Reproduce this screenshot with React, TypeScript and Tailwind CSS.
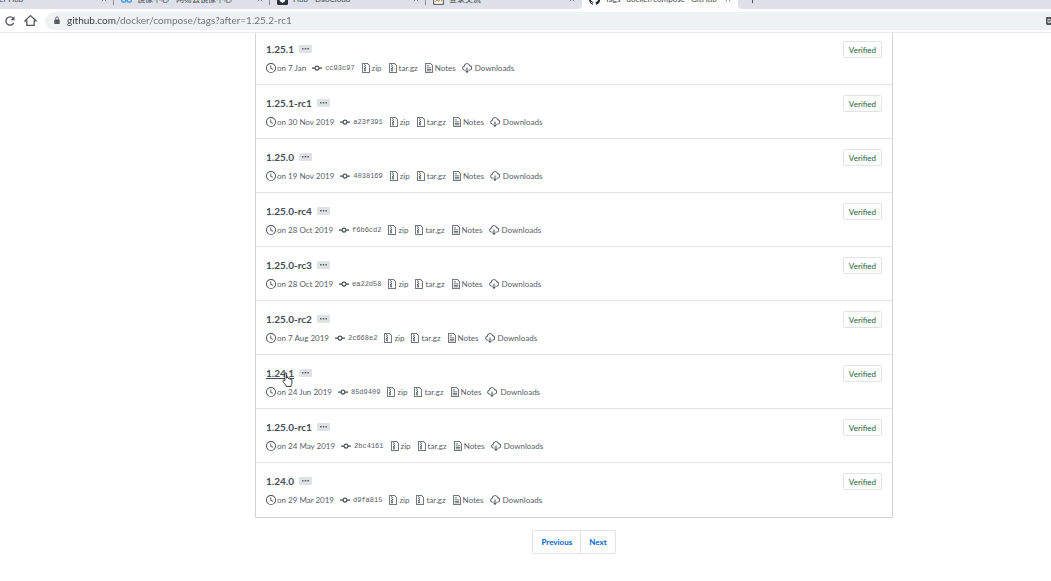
import { ReactNode } from "react";
import { Plus, X } from "lucide-react";

const tags = [
  { name: "1.25.1", date: "on 7 Jan", sha: "cc93c97" },
  { name: "1.25.1-rc1", date: "on 30 Nov 2019", sha: "a23f391" },
  { name: "1.25.0", date: "on 19 Nov 2019", sha: "4038169" },
  { name: "1.25.0-rc4", date: "on 28 Oct 2019", sha: "f6b6cd2" },
  { name: "1.25.0-rc3", date: "on 28 Oct 2019", sha: "ea22d58" },
  { name: "1.25.0-rc2", date: "on 7 Aug 2019", sha: "2c668e2" },
  { name: "1.24.1", date: "on 24 Jun 2019", sha: "85d9409", hovered: true },
  { name: "1.25.0-rc1", date: "on 24 May 2019", sha: "2bc4161" },
  { name: "1.24.0", date: "on 29 Mar 2019", sha: "d9fa815" },
];

const icons = {
  clock:
    "M8 0a8 8 0 100 16A8 8 0 008 0zm0 1.4a6.6 6.6 0 110 13.2A6.6 6.6 0 018 1.4zM7 4v4.6l3.6 2.2.8-1.2-3-1.8V4z",
  commit: "M12 7a4.1 4.1 0 00-8 0H0v2h4a4.1 4.1 0 008 0h4V7zM8 10.2a2.2 2.2 0 110-4.4 2.2 2.2 0 010 4.4z",
  zip: "M2 0h8.5L14 3.5V16H2zm1.2 1.2v13.6h9.6V4L10 1.2zM5 2h1.5v1.5H5zm1.5 1.5H8V5H6.5zM5 5h1.5v1.5H5zm1.5 1.5H8V8H6.5zM5 8h1.5L8 9.5V13H5zm.8 2v2h1.4v-2z",
  notes:
    "M2 0h8.5L14 3.5V16H2zm1.3 1.3v13.4h9.4V4L10 1.3zM4.5 4H8v1.2H4.5zm0 3h7v1.2h-7zm0 2.5h7v1.2h-7zm0 2.5h7v1.2h-7z",
  download:
    "M8.8 7v6H11l-3 3-3-3h2.2V7zM12.7 3.7A5 5 0 003 4.8 3.7 3.7 0 003.7 12H6v-1.3H3.7a2.4 2.4 0 010-4.7h.6V5a3.7 3.7 0 017.3-.6l.1.6h.8a2.9 2.9 0 010 5.7H10V12h2.5a4.2 4.2 0 00.2-8.3z",
};

const github =
  "M8 0C3.58 0 0 3.58 0 8c0 3.54 2.29 6.53 5.47 7.59.4.07.55-.17.55-.38 0-.19-.01-.82-.01-1.49-2.01.37-2.53-.49-2.69-.94-.09-.23-.48-.94-.82-1.13-.28-.15-.68-.52-.01-.53.63-.01 1.08.58 1.23.82.72 1.21 1.87.87 2.33.66.07-.52.28-.87.51-1.07-1.78-.2-3.64-.89-3.64-3.95 0-.87.31-1.59.82-2.15-.08-.2-.36-1.02.08-2.12 0 0 .67-.21 2.2.82a7.6 7.6 0 014 0c1.53-1.04 2.2-.82 2.2-.82.44 1.1.16 1.92.08 2.12.51.56.82 1.27.82 2.15 0 3.07-1.87 3.75-3.65 3.95.29.25.54.73.54 1.48 0 1.07-.01 1.93-.01 2.2 0 .21.15.46.55.38A8 8 0 008 0z";

const tabs = [
  { title: "Docker Hub", icon: <path fill="#2496ed" d="M1 8h13c0 4-3 6-7 6s-6-2-6-6zM4 4h6v3H4z" /> },
  {
    title: "镜像中心 - 网易云镜像中心",
    icon: (
      <path
        fill="none"
        stroke="#4a9de8"
        strokeWidth="2"
        d="M1 9a3 3 0 106 0 3 3 0 10-6 0zM9 9a3 3 0 106 0 3 3 0 10-6 0zM3 5c2-4 8-4 10 0"
      />
    ),
  },
  {
    title: "Hub - DaoCloud",
    icon: (
      <>
        <rect width="16" height="16" rx="2" fill="#2b3138" />
        <path fill="#fff" d="M4 6l4-2 4 2v4l-4 3-4-3z" />
      </>
    ),
  },
  {
    title: "登录交流",
    icon: (
      <>
        <rect x="1" y="1" width="14" height="14" fill="#fff" stroke="#55514c" strokeWidth="1.5" />
        <path fill="none" stroke="#c49a5a" strokeWidth="1.5" d="M3 12l3-4 2 3 3-4 2 4" />
      </>
    ),
  },
  { title: "Tags · docker/compose · GitHub", icon: <path fill="#24292e" d={github} />, active: true },
];

function TabStrip() {
  return (
    <div className="flex h-[9px] items-end overflow-hidden bg-white">
      <div className="-ml-[42px] flex grow items-end">
        {tabs.map((tab, i) => (
          <div
            key={tab.title}
            className={`flex h-5 w-39 shrink-0 items-center gap-[5px] pr-[6px] pl-[7px] text-[8px] text-[#45494d] ${
              tab.active ? "bg-white" : "bg-[#dee1e9]"
            } ${i === tabs.length - 2 ? "rounded-br-[4px]" : ""}`}
          >
            <svg viewBox="0 0 16 16" className="size-[11px] shrink-0" aria-hidden="true">
              {tab.icon}
            </svg>
            <button type="button" className="min-w-0 grow overflow-hidden text-left whitespace-nowrap">
              {tab.title}
            </button>
            <button type="button" aria-label="Close tab">
              <X className="size-2" />
            </button>
            {i < tabs.length - 2 && <span className="-mr-[6px] h-3 w-px bg-[#8c9096]" />}
          </div>
        ))}
        <div className="flex h-5 grow items-center rounded-bl-[4px] bg-[#dee1e9] pl-[9px]">
          <button type="button" aria-label="New tab">
            <Plus className="size-[11px] text-[#3c4043]" />
          </button>
        </div>
      </div>
    </div>
  );
}

function Toolbar() {
  return (
    <div className="flex h-[23px] items-center gap-2 pl-1">
      <button type="button" aria-label="Reload">
        <svg viewBox="0 0 16 16" className="size-3" fill="none" stroke="#55595e" strokeWidth="1.8" aria-hidden="true">
          <path d="M13 10.5A5.5 5.5 0 1112.3 4.5" />
          <path d="M14 1.5V7H8.5z" fill="#55595e" stroke="none" />
        </svg>
      </button>
      <button type="button" aria-label="Home">
        <svg viewBox="0 0 16 16" className="size-[13px]" fill="none" stroke="#55595e" strokeWidth="1.6" aria-hidden="true">
          <path d="M1 8.5L8 2l7 6.5h-2.5V14h-9V8.5z" />
        </svg>
      </button>
      <div className="flex h-[18px] grow items-center gap-[6px] rounded-l-full bg-[#eff2f3] pl-2">
        <svg viewBox="0 0 8 10" className="h-[9px] w-2 shrink-0" aria-hidden="true">
          <rect x="1" y="4" width="6" height="5" rx="0.5" fill="#55595e" />
          <path d="M2.5 4V2.5a1.5 1.5 0 013 0V4" fill="none" stroke="#55595e" />
        </svg>
        <input
          type="text"
          aria-label="Address"
          readOnly
          value="github.com/docker/compose/tags?after=1.25.2-rc1"
          className="min-w-0 grow bg-[linear-gradient(90deg,#35383b_50px,#6d7175_50px)] bg-clip-text text-[10px] text-transparent outline-none"
        />
        <button type="button" aria-label="Translate this page">
          <svg viewBox="0 0 5 8" className="h-2 w-[5px]" aria-hidden="true">
            <path fill="#55595e" d="M0 0h5v8H1L0 7z" />
            <path fill="none" stroke="#fff" strokeWidth="0.7" d="M4.5 2.5H2v3h2.5V4h-1" />
          </svg>
        </button>
      </div>
    </div>
  );
}

function Octicon({ name }: { name: keyof typeof icons }) {
  return (
    <svg viewBox="0 0 16 16" className="size-[10px] shrink-0 fill-[#444d56]" fillRule="evenodd" aria-hidden="true">
      <path d={icons[name]} />
    </svg>
  );
}

function MetaLink({ icon, children }: { icon: keyof typeof icons; children: ReactNode }) {
  return (
    <a href="#" className="flex items-center gap-px">
      <Octicon name={icon} />
      {children}
    </a>
  );
}

function Pointer() {
  return (
    <svg
      viewBox="0 0 12 17"
      className="pointer-events-none absolute top-[7px] left-[16px] h-[15px] w-[11px]"
      aria-hidden="true"
    >
      <path
        d="M3 10V2c0-1.6 2-1.6 2 0v5c0-1.4 2-1.2 2 0v.6c0-1.3 2-1.1 2 .2v.7c.2-1 2-.8 2 .5v3.5c0 1.5-1 2-1 4H4.5c0-2-3-4-3.7-6C.4 9.3 2 8.8 3 10z"
        fill="white"
        stroke="#222"
      />
    </svg>
  );
}

function TagRow({ name, date, sha, hovered }: { name: string; date: string; sha: string; hovered?: boolean }) {
  return (
    <li className="flex h-[54px] items-start justify-between border-b border-[#e1e4e8] px-[10px] pt-[10px] last:border-b-0">
      <div>
        <div className="relative flex h-4 items-center gap-[5px]">
          <h4 className="text-[10px] font-bold text-[#444d56]">
            <a href="#" className={hovered ? "underline" : ""}>
              {name}
            </a>
          </h4>
          <button
            type="button"
            aria-label="Show details"
            className="flex h-2 w-[13px] items-center justify-center rounded-[1px] bg-[#dfe2e5]"
          >
            <svg viewBox="0 0 7 2" className="h-[2px] w-[7px] fill-[#586069]" aria-hidden="true">
              <path d="M0 0h1.5v1.5H0zM2.7 0h1.5v1.5H2.7zM5.4 0h1.5v1.5H5.4z" />
            </svg>
          </button>
          {hovered && <Pointer />}
        </div>
        <div className="mt-[5px] flex h-3 items-center gap-[6px] text-[8px] text-[#586069]">
          <span className="flex items-center gap-px">
            <Octicon name="clock" />
            {date}
          </span>
          <a href="#" className="flex items-center gap-[3px] font-['Liberation_Mono',monospace] text-[7px]">
            <Octicon name="commit" />
            {sha}
          </a>
          <MetaLink icon="zip">zip</MetaLink>
          <MetaLink icon="zip">tar.gz</MetaLink>
          <MetaLink icon="notes">Notes</MetaLink>
          <a href="#" className="flex items-center gap-[3px]">
            <Octicon name="download" />
            Downloads
          </a>
        </div>
      </div>
      <button
        type="button"
        className="flex h-[17px] items-center rounded-[2px] border border-[#e1e4e8] px-[5px] text-[8px] text-[#22633a]"
      >
        Verified
      </button>
    </li>
  );
}

export default function App() {
  return (
    <div className="min-h-screen overflow-hidden bg-white font-['Lato','Noto_Sans_CJK_SC',sans-serif]">
      <header className="relative z-10 border-b border-[#e8eaed] bg-white">
        <TabStrip />
        <Toolbar />
      </header>
      <main className="-mt-[2px] pr-[158px] pl-[255px]">
        <ul className="border border-t-0 border-[#d1d5da]">
          {tags.map((tag) => (
            <TagRow key={tag.name} {...tag} />
          ))}
        </ul>
        <nav aria-label="Pagination" className="mt-3 flex justify-center text-[8px] font-bold text-[#0366d6]">
          <a href="#" className="flex h-6 items-center rounded-l-[2px] border border-[#e1e4e8] px-2">
            Previous
          </a>
          <a href="#" className="-ml-px flex h-6 items-center rounded-r-[2px] border border-[#e1e4e8] px-2">
            Next
          </a>
        </nav>
      </main>
    </div>
  );
}
